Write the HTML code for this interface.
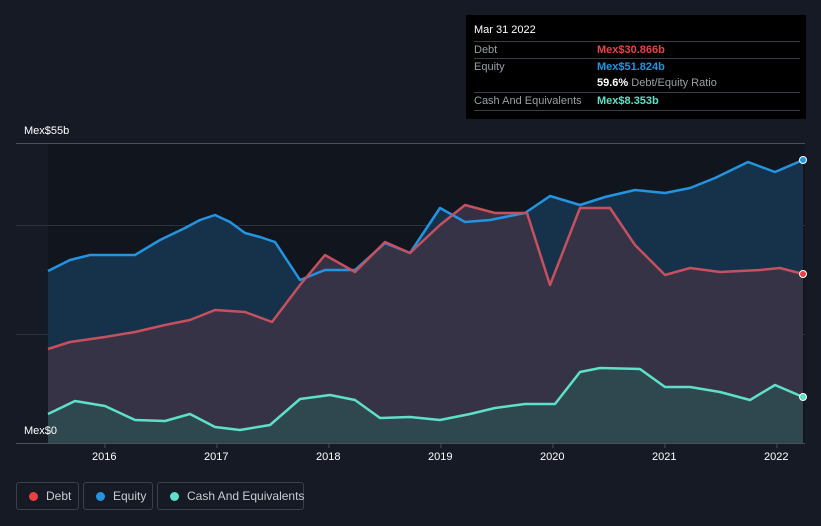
<!DOCTYPE html><html><head><style>
body{margin:0;width:821px;height:526px;background:#151a24;font-family:"Liberation Sans",sans-serif;position:relative;overflow:hidden}
.t{position:absolute;color:#fff;font-size:11px}
.tip{position:absolute;left:466px;top:15px;width:340px;height:104px;background:#000;}
.row{position:absolute;left:8px;width:326px;font-size:11px;color:#9a9ea6;border-top:1px solid #3a3d44;height:17px;line-height:17px}
.lg{position:absolute;top:482px;height:28px;border:1px solid #3a3f4a;border-radius:3px;color:#c9ccd2;font-size:12px;line-height:27px;box-sizing:border-box;white-space:nowrap}
.lg i{display:inline-block;width:9px;height:9px;border-radius:50%;margin:0 8px 0 12px;vertical-align:-1px}
</style></head><body>
<svg width="821" height="526" style="position:absolute;left:0;top:0">
<rect x="48" y="143" width="757" height="300" fill="#11151e"/>
<g stroke="#2c313b" stroke-width="1"><line x1="16" y1="143.5" x2="805" y2="143.5" stroke="#4a4f58"/><line x1="16" y1="225.5" x2="805" y2="225.5"/><line x1="16" y1="334.5" x2="805" y2="334.5"/><line x1="16" y1="443.5" x2="805" y2="443.5" stroke="#4a4f58"/></g>
<path d="M48,271 L70,260 90,255 110,255 135,255 160,240 185,228 200,220 215,215 230,222 245,233 260,237 275,242 300,280 325,270 355,270 385,243 410,253 440,208 465,222 490,220 525,213 550,196 580,205 605,197 635,190 665,193 690,188 715,178 748,162 775,172 803,160 L803,443 48,443Z" fill="#16324b"/>
<path d="M48,349 L70,342 105,337 135,332 165,325 190,320 215,310 245,312 272,322 300,285 325,255 355,272 385,242 410,253 440,225 465,205 495,213 527,213 550,285 580,208 610,208 635,245 665,275 690,268 720,272 760,270 780,268 803,274 L803,443 48,443Z" fill="#3a3346" fill-opacity="0.92"/>
<path d="M48,414 L75,401 105,406 135,420 165,421 190,414 215,427 240,430 270,425 300,399 330,395 355,400 380,418 410,417 440,420 470,414 495,408 525,404 555,404 580,372 600,368 640,369 665,387 690,387 720,392 750,400 775,385 803,397 L803,443 48,443Z" fill="#2f4a50" fill-opacity="0.9"/>
<g fill="none" stroke-width="2.5" stroke-linejoin="round">
<path d="M48,271 L70,260 90,255 110,255 135,255 160,240 185,228 200,220 215,215 230,222 245,233 260,237 275,242 300,280 325,270 355,270 385,243 410,253 440,208 465,222 490,220 525,213 550,196 580,205 605,197 635,190 665,193 690,188 715,178 748,162 775,172 803,160" stroke="#2394e0"/>
<path d="M48,349 L70,342 105,337 135,332 165,325 190,320 215,310 245,312 272,322 300,285 325,255 355,272 385,242 410,253 440,225 465,205 495,213 527,213 550,285 580,208 610,208 635,245 665,275 690,268 720,272 760,270 780,268 803,274" stroke="#c6505e"/>
<path d="M48,414 L75,401 105,406 135,420 165,421 190,414 215,427 240,430 270,425 300,399 330,395 355,400 380,418 410,417 440,420 470,414 495,408 525,404 555,404 580,372 600,368 640,369 665,387 690,387 720,392 750,400 775,385 803,397" stroke="#5ee0c8"/>
</g>
<circle cx="803" cy="160" r="3.5" fill="#2394e0" stroke="#fff" stroke-width="1"/>
<circle cx="803" cy="274" r="3.5" fill="#e84045" stroke="#fff" stroke-width="1"/>
<circle cx="803" cy="397" r="3.5" fill="#5ee0c8" stroke="#fff" stroke-width="1"/>
<g stroke="#4a4f58"><line x1="105" y1="443" x2="105" y2="448"/><line x1="217" y1="443" x2="217" y2="448"/><line x1="329" y1="443" x2="329" y2="448"/><line x1="441" y1="443" x2="441" y2="448"/><line x1="553" y1="443" x2="553" y2="448"/><line x1="665" y1="443" x2="665" y2="448"/><line x1="777" y1="443" x2="777" y2="448"/></g>
</svg>
<div class="t" style="left:24px;top:125px">Mex$55b</div>
<div class="t" style="left:24px;top:425px">Mex$0</div>
<div class="t" style="left:92px;top:451px">2016</div><div class="t" style="left:204px;top:451px">2017</div><div class="t" style="left:316px;top:451px">2018</div><div class="t" style="left:428px;top:451px">2019</div><div class="t" style="left:540px;top:451px">2020</div><div class="t" style="left:652px;top:451px">2021</div><div class="t" style="left:764px;top:451px">2022</div>
<div class="tip">
<div style="position:absolute;left:8px;top:9px;color:#fff;font-size:11px">Mar 31 2022</div>
<div class="row" style="top:26px">Debt<span style="position:absolute;left:123px;color:#e8424a;font-weight:bold">Mex$30.866b</span></div>
<div class="row" style="top:43px">Equity<span style="position:absolute;left:123px;color:#2394e0;font-weight:bold">Mex$51.824b</span></div>
<div class="row" style="top:60px;border-top:none"><span style="position:absolute;left:123px;color:#9a9ea6"><b style="color:#fff">59.6%</b> Debt/Equity Ratio</span></div>
<div class="row" style="top:77px;border-bottom:1px solid #3a3d44">Cash And Equivalents<span style="position:absolute;left:123px;color:#5ee0c8;font-weight:bold">Mex$8.353b</span></div>
</div>
<div class="lg" style="left:16px;width:63px"><i style="background:#e84045"></i>Debt</div>
<div class="lg" style="left:83px;width:70px"><i style="background:#2394e0"></i>Equity</div>
<div class="lg" style="left:157px;width:147px"><i style="background:#5ee0c8"></i>Cash And Equivalents</div>
</body></html>
